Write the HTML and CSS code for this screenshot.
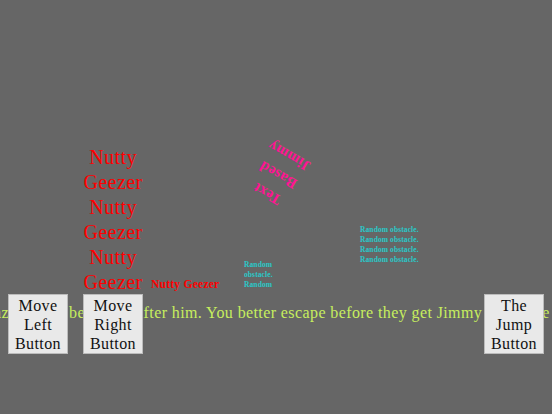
FILE: index.html
```html
<!DOCTYPE html>
<html>
<head>
<meta charset="utf-8">
<title>Text Based Jimmy</title>
<link rel="stylesheet" href="styles.css">
</head>
<body>
<div class="game">
  <div class="scene">
    <div class="title">Text Based Jimmy</div>
    <div class="geezer geezer-big">Nutty Geezer Nutty Geezer Nutty Geezer</div>
    <div class="geezer geezer-small">Nutty Geezer</div>
    <div class="obstacle obstacle-a">Random obstacle. Random obstacle.</div>
    <div class="obstacle obstacle-b">Random obstacle. Random obstacle. Random obstacle. Random obstacle.</div>
  </div>
  <div class="controls">
    <div class="ticker"><span class="ticker-lead">Jimmy angered the Nutty Geezers and now the cra</span>zies shall be racing after him. You better escape before they get Jimmy or it's the end!</div>
    <div class="btn-group">
      <button class="btn">Move Left Button</button>
      <button class="btn">Move Right Button</button>
    </div>
    <button class="btn">The Jump Button</button>
  </div>
</div>
</body>
</html>
```
FILE: styles.css
```css
html, body {
  margin: 0;
  padding: 0;
}
body {
  background: #666666;
  font-family: "Liberation Serif", "Times New Roman", serif;
  font-size: 16px;
  letter-spacing: 0.4px;
  overflow: hidden;
}
.game {
  width: 552px;
  height: 414px;
  position: relative;
  overflow: hidden;
}
.scene {
  position: relative;
  height: 294px;
}
.title {
  position: absolute;
  left: 254px;
  top: 142px;
  width: 48px;
  font-size: 15px;
  font-weight: bold;
  line-height: 22px;
  text-align: center;
  color: #ff1493;
  transform: rotate(210deg);
}
.geezer {
  position: absolute;
  color: #ff0000;
}
.geezer-big {
  left: 81px;
  top: 145px;
  width: 64px;
  font-size: 20px;
  line-height: 25px;
  text-align: center;
}
.geezer-small {
  left: 151px;
  top: 278px;
  font-size: 11.5px;
  font-weight: bold;
  letter-spacing: 0.25px;
  white-space: nowrap;
}
.obstacle {
  position: absolute;
  color: #2ac8c8;
  font-size: 7.5px;
  font-weight: bold;
  line-height: 10px;
  letter-spacing: 0.1px;
}
.obstacle-a {
  left: 244px;
  top: 260px;
  width: 36px;
  height: 30px;
  overflow: hidden;
}
.obstacle-b {
  left: 360px;
  top: 225px;
  width: 68px;
}
.controls {
  position: relative;
  height: 60px;
  padding: 0 8px;
  display: flex;
  justify-content: space-between;
  align-items: flex-start;
}
.ticker {
  position: absolute;
  left: 1.5px;
  top: 10px;
  white-space: nowrap;
  color: #c6ee5e;
  font-size: 16px;
}
.ticker-lead {
  position: absolute;
  right: 100%;
  top: 0;
}
.btn-group {
  display: flex;
  gap: 15px;
}
.btn {
  position: relative;
  z-index: 1;
  width: 60px;
  height: 60px;
  margin: 0;
  padding: 0;
  box-sizing: border-box;
  background: #e9e9e9;
  border: 1px solid #bcbcbc;
  font-family: "Liberation Serif", "Times New Roman", serif;
  font-size: 16px;
  letter-spacing: 0.4px;
  line-height: 19px;
  color: #111111;
  text-align: center;
  display: flex;
  align-items: center;
  justify-content: center;
}
```
